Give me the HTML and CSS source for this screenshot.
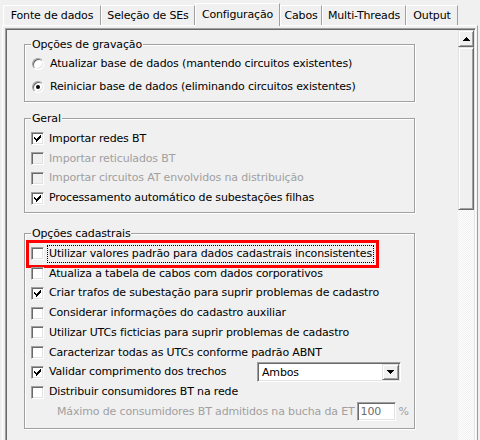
FILE: index.html
```html
<!DOCTYPE html>
<html lang="pt">
<head>
<meta charset="utf-8">
<title>Configuração</title>
<link rel="stylesheet" href="styles.css">
</head>
<body>
<div class="tabs">
  <div class="tab t1">Fonte de dados</div>
  <div class="tab t2">Seleção de SEs</div>
  <div class="tab t3 active">Configuração</div>
  <div class="tab t4">Cabos</div>
  <div class="tab t5">Multi-Threads</div>
  <div class="tab t6">Output</div>
</div>
<div class="page">
  <div class="panel">
    <div class="content">
      <fieldset class="group g1">
        <legend>Opções de gravação</legend>
        <div class="row"><span class="radio"></span><span class="label">Atualizar base de dados (mantendo circuitos existentes)</span></div>
        <div class="row"><span class="radio on"></span><span class="label">Reiniciar base de dados (eliminando circuitos existentes)</span></div>
      </fieldset>
      <fieldset class="group g2">
        <legend>Geral</legend>
        <div class="row"><span class="cb"><svg viewBox="0 0 7 7" width="7" height="7"><path d="M0 2h1v1h1v1h1V3h1V2h1V1h1V0h1v3h-1v1h-1v1h-1v1h-1v1h-1V6H2V5H1V4H0z"/></svg></span><span class="label">Importar redes BT</span></div>
        <div class="row disabled"><span class="cb"></span><span class="label">Importar reticulados BT</span></div>
        <div class="row disabled"><span class="cb"></span><span class="label">Importar circuitos AT envolvidos na distribuição</span></div>
        <div class="row"><span class="cb"><svg viewBox="0 0 7 7" width="7" height="7"><path d="M0 2h1v1h1v1h1V3h1V2h1V1h1V0h1v3h-1v1h-1v1h-1v1h-1v1h-1V6H2V5H1V4H0z"/></svg></span><span class="label">Processamento automático de subestações filhas</span></div>
      </fieldset>
      <fieldset class="group g3">
        <legend>Opções cadastrais</legend>
        <div class="row"><span class="highlight"><span class="cb"></span><span class="label focus">Utilizar valores padrão para dados cadastrais inconsistentes</span></span></div>
        <div class="row"><span class="cb"></span><span class="label">Atualiza a tabela de cabos com dados corporativos</span></div>
        <div class="row"><span class="cb"><svg viewBox="0 0 7 7" width="7" height="7"><path d="M0 2h1v1h1v1h1V3h1V2h1V1h1V0h1v3h-1v1h-1v1h-1v1h-1v1h-1V6H2V5H1V4H0z"/></svg></span><span class="label">Criar trafos de subestação para suprir problemas de cadastro</span></div>
        <div class="row"><span class="cb"></span><span class="label">Considerar informações do cadastro auxiliar</span></div>
        <div class="row"><span class="cb"></span><span class="label">Utilizar UTCs ficticias para suprir problemas de cadastro</span></div>
        <div class="row"><span class="cb"></span><span class="label">Caracterizar todas as UTCs conforme padrão ABNT</span></div>
        <div class="row"><span class="cb"><svg viewBox="0 0 7 7" width="7" height="7"><path d="M0 2h1v1h1v1h1V3h1V2h1V1h1V0h1v3h-1v1h-1v1h-1v1h-1v1h-1V6H2V5H1V4H0z"/></svg></span><span class="label">Validar comprimento dos trechos</span>
          <div class="select"><span class="select-text">Ambos</span><span class="select-btn"><svg viewBox="0 0 7 4" width="7" height="4"><path d="M0 0h7v1H6v1H5v1H4v1H3V3H2V2H1V1H0z"/></svg></span></div>
        </div>
        <div class="row"><span class="cb"></span><span class="label">Distribuir consumidores BT na rede</span></div>
        <div class="row sub disabled"><span class="label">Máximo de consumidores BT admitidos na bucha da ET</span><span class="spin">100</span><span class="pct">%</span></div>
      </fieldset>
    </div>
    <div class="scrollbar">
      <div class="sb-btn"><svg viewBox="0 0 7 4" width="7" height="4"><path d="M3 0h1v1h1v1h1v1h1v1H0V3h1V2h1V1h1z"/></svg></div>
      <div class="sb-thumb"></div>
      <div class="sb-track"></div>
    </div>
  </div>
</div>
</body>
</html>
```
FILE: styles.css
```css
* { box-sizing: border-box; }
html, body { margin: 0; padding: 0; }
body {
  width: 480px;
  height: 440px;
  overflow: hidden;
  background: #f0f0f0;
  font-family: "DejaVu Sans", "Liberation Sans", sans-serif;
  font-size: 11px;
  letter-spacing: -0.15px;
  color: #000;
}

/* Tabs */
.tabs {
  display: flex;
  align-items: flex-end;
  height: 25px;
  padding-left: 3px;
  position: relative;
  z-index: 1;
}
.tab {
  height: 20px;
  border-top: 1px solid #fff;
  border-left: 1px solid #fff;
  border-right: 1px solid #a0a0a0;
  display: flex;
  align-items: center;
  justify-content: center;
  white-space: nowrap;
}
.tab.active {
  height: 23px;
  margin-bottom: -1px;
  padding-bottom: 2px;
  background: #f0f0f0;
}
.t1 { width: 98px; }
.t2 { width: 94px; }
.t3 { width: 85px; }
.t4 { width: 42px; }
.t5 { width: 84px; }
.t6 { width: 52px; }

/* Page and scroll panel */
.page {
  margin: 0 2px;
  border: 1px solid;
  border-color: #fff #a0a0a0 #a0a0a0 #fff;
  padding: 2px 1px 0 2px;
}
.panel {
  display: flex;
  height: 420px;
  border: 1px solid;
  border-color: #a0a0a0 #fff #fff #a0a0a0;
  box-shadow: inset 1px 1px 0 #696969, inset -1px -1px 0 #e3e3e3;
  padding: 1px;
}
.content {
  flex: 1;
  padding: 8px 0 0 17px;
}

/* Group boxes */
.group {
  margin: 0;
  width: 391px;
  min-width: 0;
  border: 1px solid #a0a0a0;
  box-shadow: inset 1px 1px 0 #fff, 1px 1px 0 #fff;
  padding: 4px 6px 4px 6px;
}
.group legend {
  padding: 0 1px;
  line-height: 13px;
  background: #f0f0f0;
}
.g1 { padding-top: 3px; }
.g1 .row { height: 20px; }
.g1 .row + .row { margin-top: 3px; }
.g2 { margin-top: 10px; }
.g3 { margin-top: 14px; padding-bottom: 6px; }

.row {
  display: flex;
  align-items: center;
  height: 19.75px;
  white-space: nowrap;
}
.label {
  padding: 0 1px;
  border: 1px solid transparent;
  line-height: 16px;
  margin-left: 3px;
}
.label.focus { border: 1px dotted #000; }
.disabled { color: #a0a0a0; }

.highlight {
  display: inline-flex;
  align-items: center;
  outline: 3px solid #ff0000;
  outline-offset: 2px;
}

/* Checkbox */
.cb {
  width: 13px;
  height: 13px;
  flex: none;
  border: 1px solid;
  border-color: #a0a0a0 #fff #fff #a0a0a0;
  box-shadow: inset 1px 1px 0 #696969, inset -1px -1px 0 #e3e3e3;
  background: #fff;
  display: flex;
  align-items: center;
  justify-content: center;
}
.disabled .cb { background: #f0f0f0; }

/* Radio */
.radio {
  width: 12px;
  height: 12px;
  flex: none;
  margin-left: 1px;
  margin-right: 1px;
  border-radius: 50%;
  border: 1px solid;
  border-color: #a0a0a0 #fff #fff #a0a0a0;
  box-shadow: inset 1px 1px 0 #696969, inset -1px -1px 0 #e3e3e3;
  background: #fff;
  display: flex;
  align-items: center;
  justify-content: center;
}
.radio.on::after {
  content: "";
  width: 4px;
  height: 4px;
  border-radius: 50%;
  background: #000;
}

/* Combo box */
.select {
  margin-left: auto;
  margin-right: 7px;
  width: 144px;
  height: 20px;
  flex: none;
  border: 1px solid;
  border-color: #a0a0a0 #fff #fff #a0a0a0;
  box-shadow: inset 1px 1px 0 #696969, inset -1px -1px 0 #e3e3e3;
  background: #fff;
  padding: 1px;
  display: flex;
  align-items: center;
}
.select-text { flex: 1; padding-left: 3px; }
.select-btn, .sb-btn, .sb-thumb {
  background: #f0f0f0;
  border: 1px solid;
  border-color: #e3e3e3 #696969 #696969 #e3e3e3;
  box-shadow: inset 1px 1px 0 #fff, inset -1px -1px 0 #a0a0a0;
}
.select-btn {
  width: 17px;
  height: 16px;
  display: flex;
  align-items: center;
  justify-content: center;
}
svg { display: block; }

/* Spin / percent */
.sub { padding-left: 21px; }
.spin {
  margin-left: auto;
  width: 39px;
  height: 19px;
  flex: none;
  border: 1px solid;
  border-color: #a0a0a0 #fff #fff #a0a0a0;
  box-shadow: inset 1px 1px 0 #696969, inset -1px -1px 0 #e3e3e3;
  background: #fff;
  color: #6d6d6d;
  padding-left: 3px;
  line-height: 17px;
}
.pct { margin-left: 3px; margin-right: 8px; }

/* Scrollbar */
.scrollbar {
  width: 16px;
  flex: none;
  display: flex;
  flex-direction: column;
}
.sb-btn {
  height: 17px;
  display: flex;
  align-items: center;
  justify-content: center;
}
.sb-thumb { height: 163px; }
.sb-track {
  flex: 1;
  background: repeating-conic-gradient(#fff 0 25%, #f0f0f0 0 50%) 0 0 / 2px 2px;
}
```
